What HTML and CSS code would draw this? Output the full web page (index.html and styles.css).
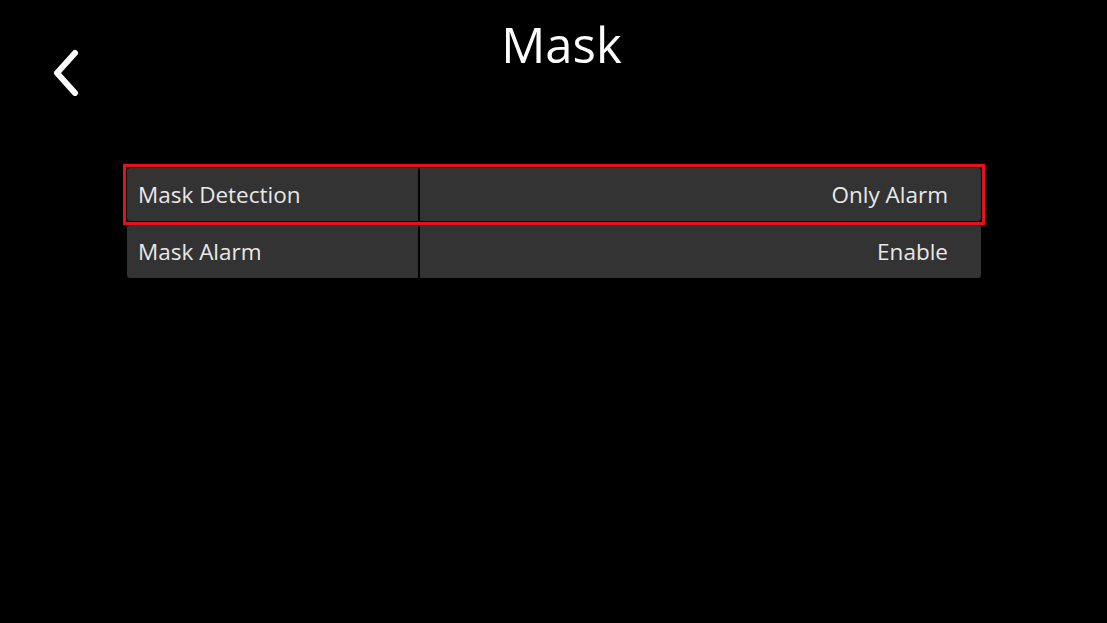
FILE: index.html
```html
<!DOCTYPE html>
<html>
<head>
<meta charset="utf-8">
<title>Mask</title>
<link rel="stylesheet" href="styles.css">
</head>
<body>
<div class="page">
	<div class="header">
		<div class="back">
			<svg width="30" height="48" viewBox="0 0 30 48">
				<polyline points="24,5 6,25 24,45" fill="none" stroke="#fff" stroke-width="6" stroke-linecap="round" stroke-linejoin="round"/>
			</svg>
		</div>
		<h1 class="title">Mask</h1>
	</div>
	<div class="list">
		<div class="row selected">
			<div class="label">Mask Detection</div>
			<div class="value">Only Alarm</div>
		</div>
		<div class="row">
			<div class="label">Mask Alarm</div>
			<div class="value">Enable</div>
		</div>
	</div>
</div>
</body>
</html>
```

FILE: styles.css
```css
body{
	margin: 0;
	background-color: #000;
	color: #fff;
	font-family: "Open Sans", "Noto Sans", sans-serif;
}
.page{
	width: 1107px;
	height: 623px;
}
.header{
	height: 168px;
	position: relative;
}
.back{
	position: absolute;
	left: 51px;
	top: 48px;
}
.title{
	margin: 0;
	padding-top: 10px;
	padding-left: 16px;
	text-align: center;
	font-size: 49px;
	font-weight: normal;
	line-height: 68px;
}
.list{
	width: 854px;
	margin-left: 127px;
	display: flex;
	flex-direction: column;
	gap: 4px;
}
.row{
	display: flex;
	height: 53px;
	gap: 2px;
	font-size: 22.5px;
	color: #e8e8e8;
}
.row.selected{
	outline: 3px solid #e3121c;
	outline-offset: 1px;
}
.label{
	box-sizing: border-box;
	width: 291px;
	padding-left: 11px;
	background-color: #333;
	border-radius: 3px 0 0 3px;
	display: flex;
	align-items: center;
}
.value{
	flex: 1;
	box-sizing: border-box;
	padding-right: 33px;
	background-color: #333;
	border-radius: 0 3px 3px 0;
	display: flex;
	align-items: center;
	justify-content: flex-end;
}
```
